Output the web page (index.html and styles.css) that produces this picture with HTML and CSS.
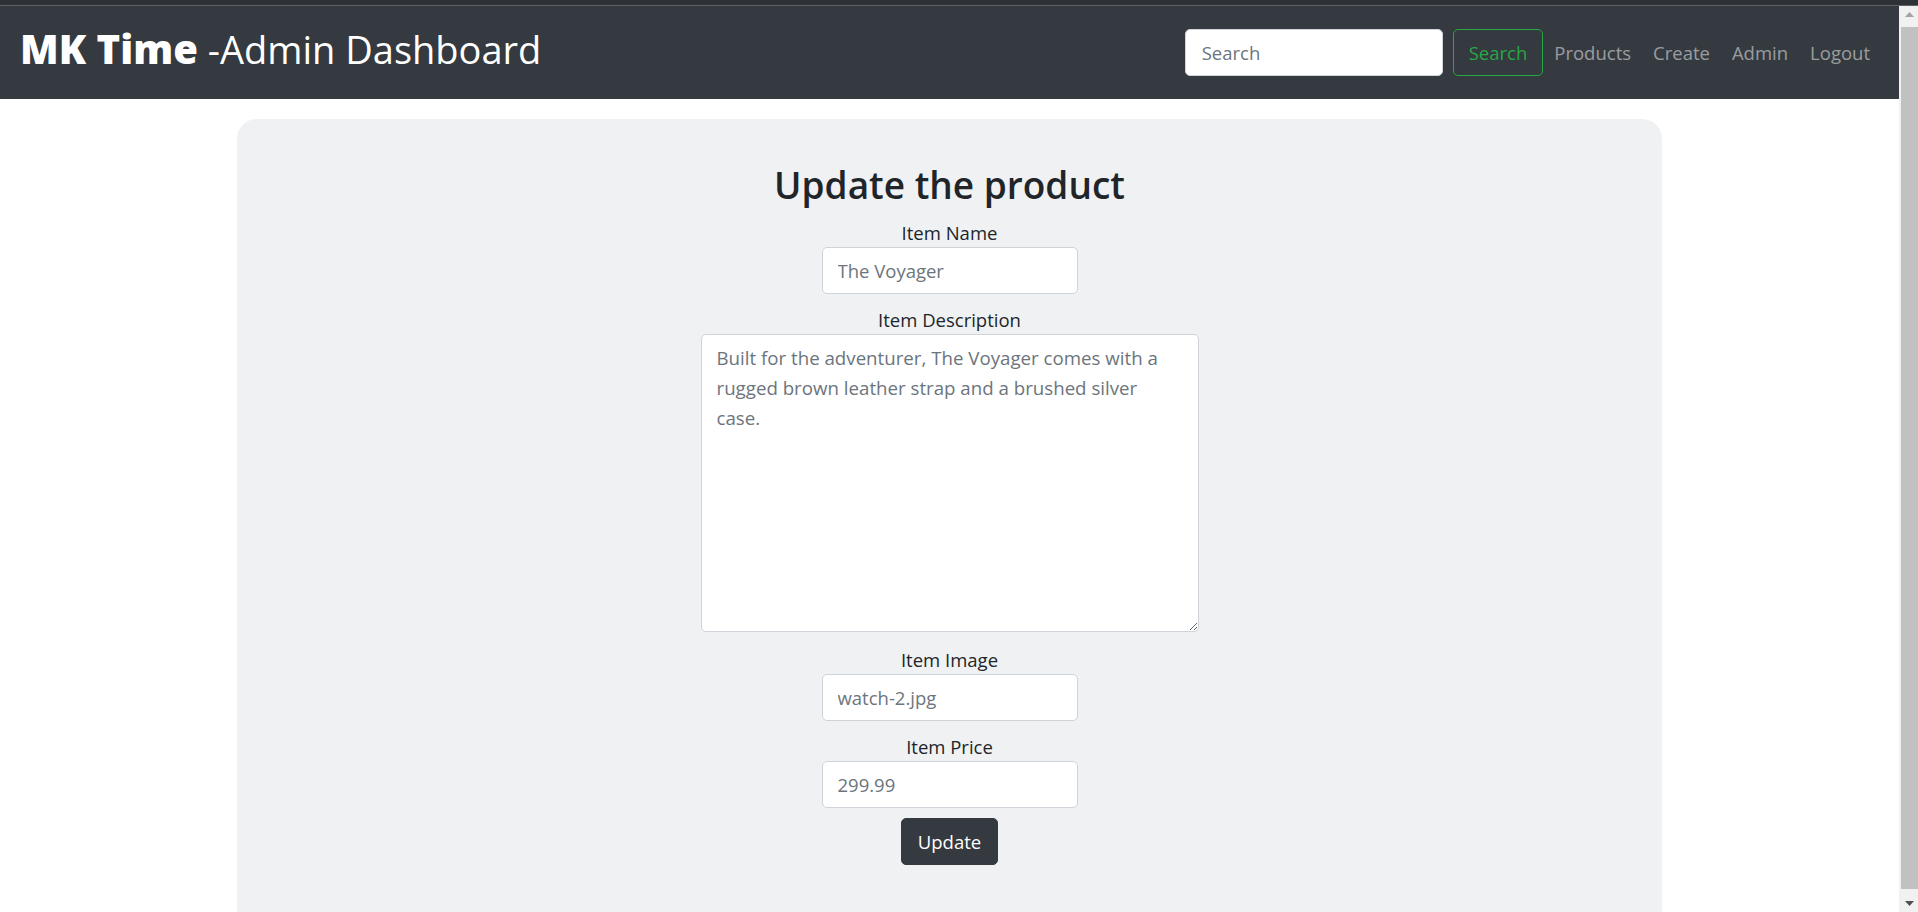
FILE: index.html
```html
<!DOCTYPE html>
<html lang="en">
<head>
<meta charset="utf-8">
<title>MK Time - Admin Dashboard</title>
<link rel="stylesheet" href="styles.css">
</head>
<body>
<div class="os-strip"></div>
<div class="window">
  <div class="page">
    <nav class="navbar">
      <a class="brand" href="#"><span class="brand-strong">MK Time</span><span class="brand-rest"> -Admin Dashboard</span></a>
      <div class="nav-right">
        <form class="search-form">
          <input class="nav-search" type="search" placeholder="Search">
          <button class="btn-outline" type="button">Search</button>
        </form>
        <ul class="nav-links">
          <li><a class="nav-link" href="#">Products</a></li>
          <li><a class="nav-link" href="#">Create</a></li>
          <li><a class="nav-link" href="#">Admin</a></li>
          <li><a class="nav-link" href="#">Logout</a></li>
        </ul>
      </div>
    </nav>
    <main class="content">
      <section class="panel">
        <h2 class="panel-title">Update the product</h2>
        <form class="product-form">
          <label class="field-label" for="name">Item Name</label>
          <input class="field-input" id="name" type="text" value="The Voyager">
          <label class="field-label gap" for="desc">Item Description</label>
          <textarea class="field-textarea" id="desc">Built for the adventurer, The Voyager comes with a rugged brown leather strap and a brushed silver case.</textarea>
          <label class="field-label gap-lg" for="image">Item Image</label>
          <input class="field-input" id="image" type="text" value="watch-2.jpg">
          <label class="field-label gap" for="price">Item Price</label>
          <input class="field-input" id="price" type="text" value="299.99">
          <button class="btn-dark" type="button">Update</button>
        </form>
      </section>
    </main>
  </div>
  <div class="scrollbar">
    <div class="sb-btn">
      <svg width="9" height="5" viewBox="0 0 9 5"><polygon points="0,5 4.5,0 9,5" fill="#a3a3a3"/></svg>
    </div>
    <div class="sb-thumb"></div>
    <div class="sb-btn">
      <svg width="9" height="5" viewBox="0 0 9 5"><polygon points="0,0 9,0 4.5,5" fill="#505050"/></svg>
    </div>
  </div>
</div>
</body>
</html>
```

FILE: styles.css
```css
* {
  box-sizing: border-box;
}

html, body {
  margin: 0;
  padding: 0;
  height: 100%;
  overflow: hidden;
}

body {
  font-family: "Open Sans", "Noto Sans", sans-serif;
  font-size: 18.5px;
  line-height: 30px;
  color: #212529;
  background: #ffffff;
}

.os-strip {
  height: 6px;
  background: #2e3237;
  border-bottom: 1px solid #5f6367;
}

.window {
  display: flex;
  height: calc(100vh - 6px);
}

.page {
  flex: 1;
  min-width: 0;
  background: #ffffff;
  overflow: hidden;
}

/* Navbar */
.navbar {
  height: 93px;
  background: #343a40;
  padding: 0 20px;
  display: flex;
  align-items: center;
  justify-content: space-between;
}

.brand {
  color: #ffffff;
  text-decoration: none;
  line-height: 60px;
  white-space: nowrap;
}

.brand-strong {
  font-size: 40px;
  font-weight: 800;
}

.brand-rest {
  font-size: 38px;
  font-weight: 400;
}

.nav-right {
  display: flex;
  align-items: center;
}

.search-form {
  display: flex;
  align-items: center;
  margin: 0;
}

.nav-search {
  width: 258px;
  height: 47px;
  margin-right: 10px;
  padding: 0 16px;
  border: 1px solid #ced4da;
  border-radius: 5px;
  background: #ffffff;
  font-family: inherit;
  font-size: 18.5px;
  color: #495057;
}

.nav-search::placeholder {
  color: #6c757d;
}

.btn-outline {
  height: 47px;
  padding: 0 15px;
  border: 1px solid #28a745;
  border-radius: 5px;
  background: transparent;
  color: #28a745;
  font-family: inherit;
  font-size: 18.5px;
  line-height: 30px;
}

.nav-links {
  display: flex;
  list-style: none;
  margin: 0;
  padding: 0;
}

.nav-link {
  display: block;
  padding: 0 11px;
  color: rgba(255, 255, 255, 0.5);
  text-decoration: none;
  line-height: 30px;
}

.nav-links li:last-child .nav-link {
  padding-right: 9px;
}

/* Content */
.content {
  padding-top: 20px;
}

.panel {
  width: 75%;
  margin: 0 auto;
  background: #f0f1f3;
  border-radius: 20px;
  padding: 42px 20px 120px;
  text-align: center;
}

.panel-title {
  margin: 0 0 9px;
  font-size: 37px;
  font-weight: 600;
  line-height: 48px;
  color: #212529;
}

.product-form {
  display: flex;
  flex-direction: column;
  align-items: center;
}

.field-label {
  display: block;
  line-height: 29px;
  color: #212529;
}

.field-label.gap {
  margin-top: 11px;
}

.field-label.gap-lg {
  margin-top: 13px;
}

.field-input {
  display: block;
  width: 256px;
  height: 47px;
  padding: 0 15px;
  border: 1px solid #ced4da;
  border-radius: 5px;
  background: #ffffff;
  font-family: inherit;
  font-size: 18.5px;
  color: #6c757d;
}

.field-textarea {
  display: block;
  width: 498px;
  height: 298px;
  padding: 7.5px 26px 7.5px 15px;
  border: 1px solid #ced4da;
  border-radius: 5px;
  background: #ffffff;
  font-family: inherit;
  font-size: 18.7px;
  line-height: 30px;
  color: #6c757d;
  resize: both;
}

.btn-dark {
  margin-top: 10px;
  width: 97px;
  height: 47px;
  padding: 0 15px;
  border: 1px solid #343a40;
  border-radius: 5px;
  background: #343a40;
  color: #ffffff;
  font-family: inherit;
  font-size: 18.5px;
  line-height: 30px;
}

/* Scrollbar */
.scrollbar {
  width: 19px;
  padding-left: 2px;
  background: #f1f1f1;
  display: flex;
  flex-direction: column;
}

.sb-btn {
  height: 17px;
  display: flex;
  align-items: center;
  justify-content: center;
}

.sb-thumb {
  flex: 1;
  margin: 4px 0 6px;
  background: #c1c1c1;
}
```
